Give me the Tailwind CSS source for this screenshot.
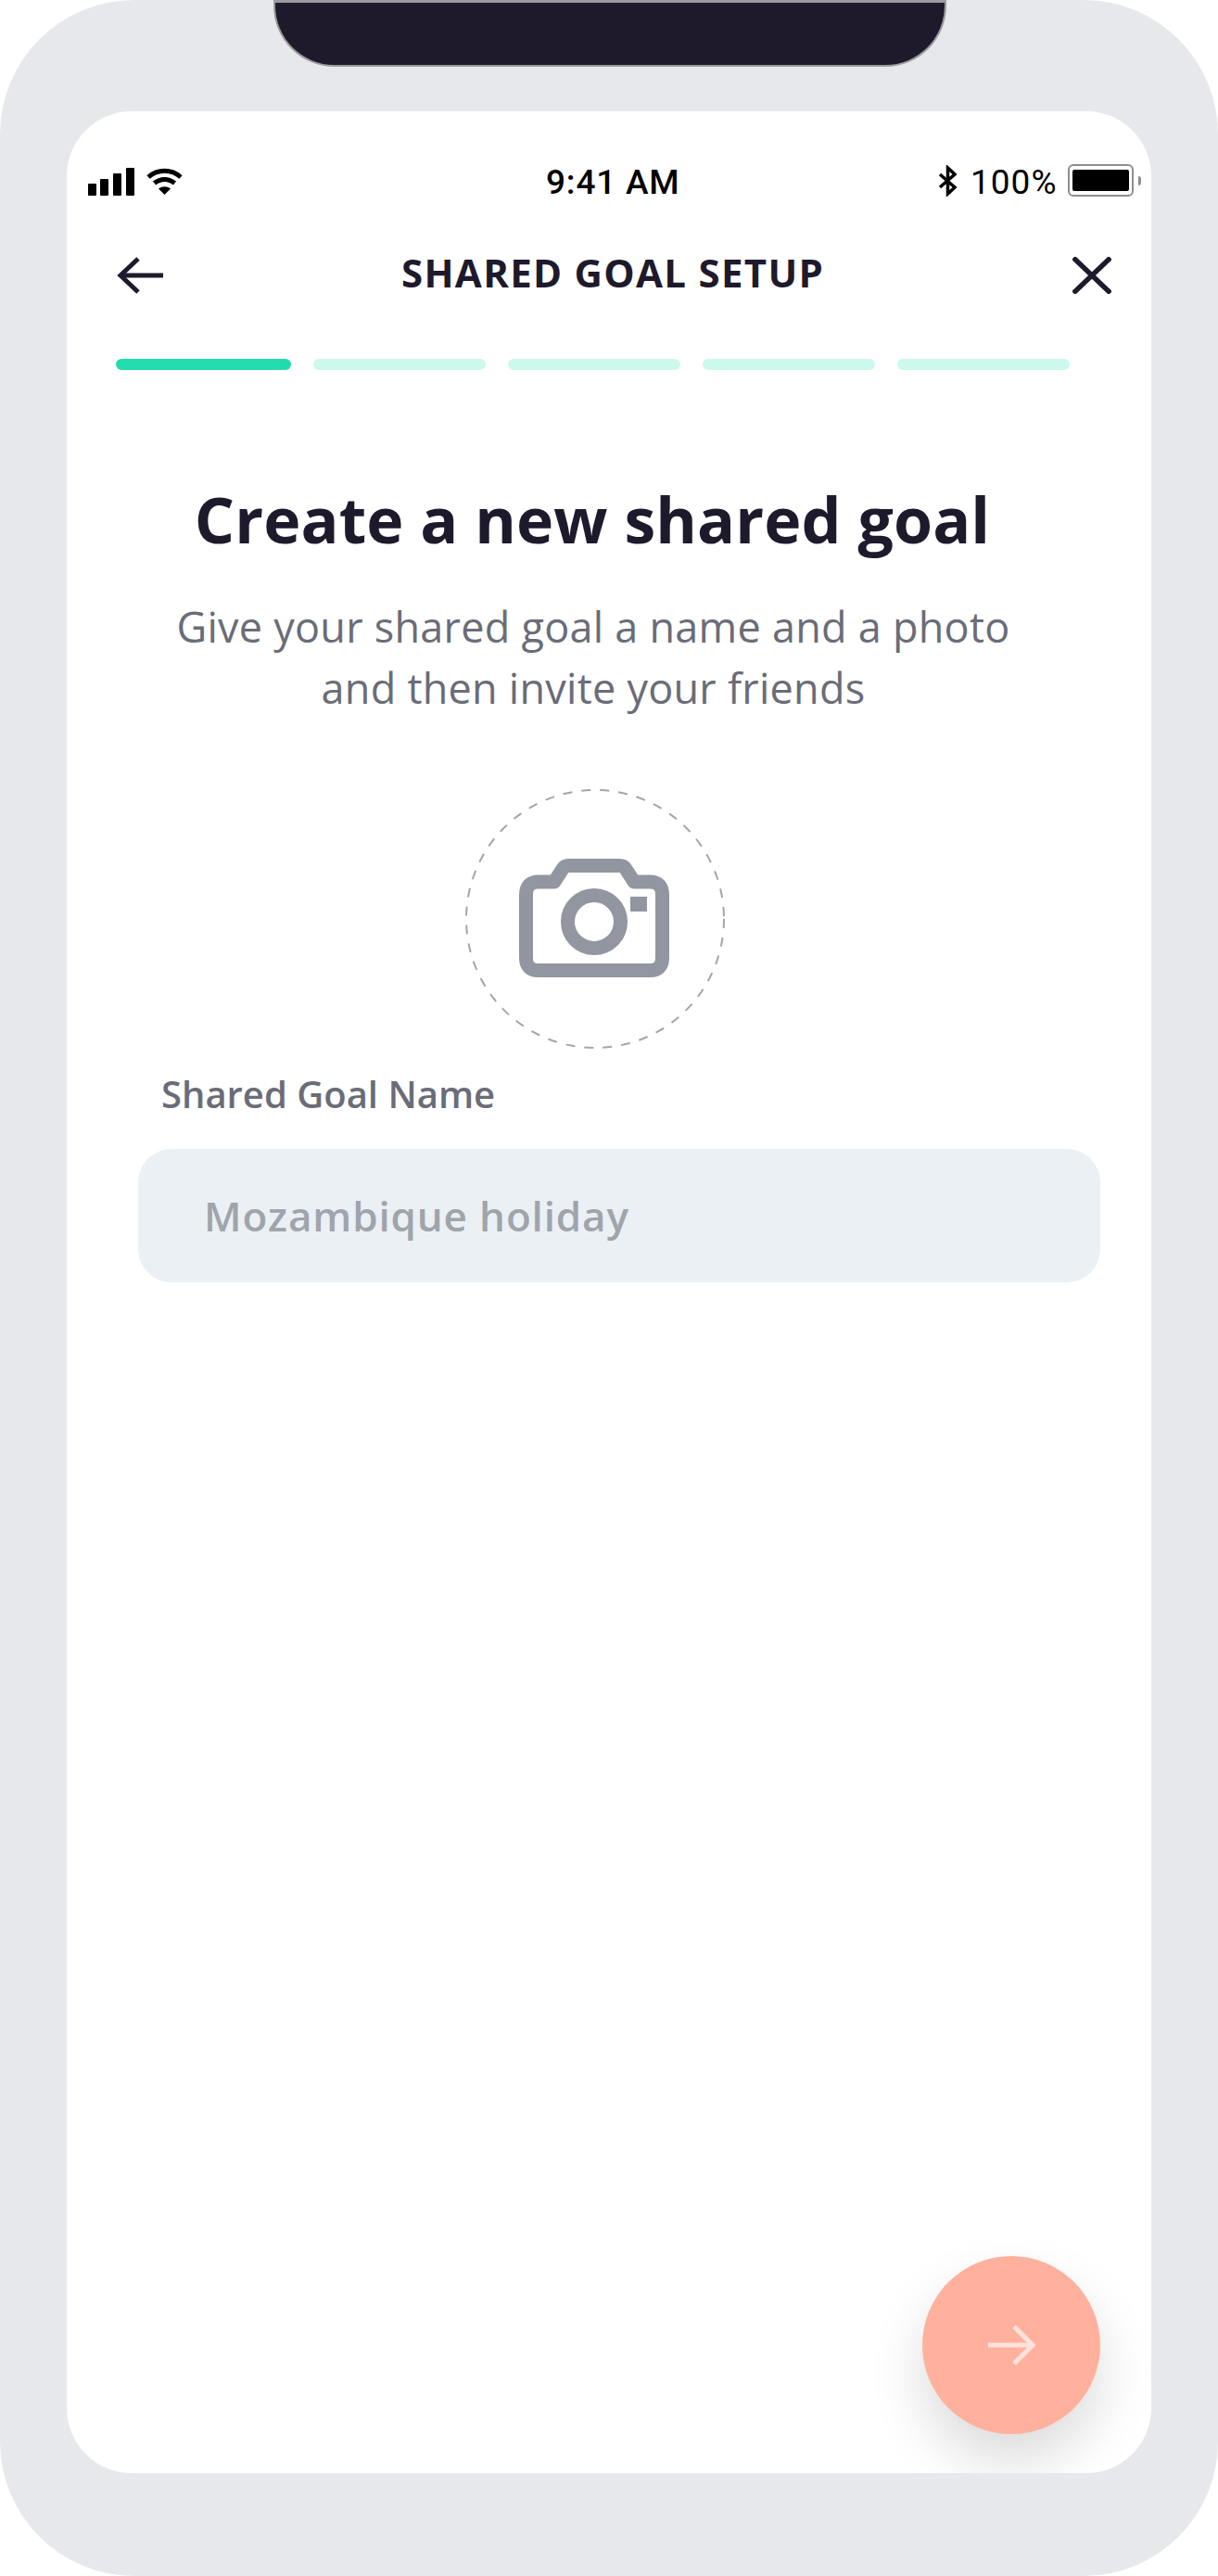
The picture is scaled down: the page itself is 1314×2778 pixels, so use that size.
<!DOCTYPE html>
<html>
<head>
<meta charset="utf-8">
<script src="https://cdn.jsdelivr.net/npm/@tailwindcss/browser@4"></script>
</head>
<body class="bg-white font-['Open_Sans','Noto_Sans',sans-serif]">
<div class="relative h-[2778px] w-[1314px] rounded-[145px] bg-[#e7e8ec] pt-[120px] px-[72px]">
  <div class="absolute left-[295px] top-0 h-[72px] w-[726px] rounded-b-[66px] border-x-2 border-b-2 border-t-[3px] border-[#9a9a9f] bg-[#1e1a2c]"></div>
  <div class="relative h-[2547px] w-[1170px] overflow-hidden rounded-[70px] bg-white pt-[57px]">
    <!-- status bar -->
    <div class="flex h-[35px] items-center pl-[23px] text-black">
      <svg class="mt-[3px] h-[30px] w-[50px] shrink-0" viewBox="0 0 50 30" fill="#000"><rect x="0" y="17" width="9" height="13" rx="1"/><rect x="13" y="12" width="9" height="18" rx="1"/><rect x="27" y="6" width="9" height="24" rx="1"/><rect x="41" y="0" width="9" height="30" rx="1"/></svg>
      <svg class="mt-[3px] ml-[13px] h-[30px] w-[39px] shrink-0" viewBox="0 0 39 30" fill="none" stroke="#000" stroke-width="5"><path d="M2 10C12 1 27 1 37 10"/><path d="M8.500 16.500C15 11 24 11 30.500 16.500"/><path d="M19.500 29L13 22.500C17 19.500 22 19.500 26 22.500Z" fill="#000" stroke="none"/></svg>
      <span class="mt-[4px] ml-[392px] w-[143px] shrink-0 whitespace-nowrap font-['Roboto',sans-serif] text-[37px] leading-[35px] font-medium tracking-[0.8px]">9:41 AM</span>
      <svg class="ml-[280px] h-[34px] w-[21px] shrink-0" viewBox="0 0 21 34" fill="none" stroke="#000" stroke-width="3.500"><path d="M2 10L18 24L10.500 31V3L18 10L2 24"/></svg>
      <span class="mt-[4px] ml-[14px] w-[91px] shrink-0 whitespace-nowrap font-['Roboto',sans-serif] text-[37px] leading-[35px] tracking-[1px]">100%</span>
      <div class="ml-[14px] flex h-[35px] w-[71px] shrink-0 items-center justify-center rounded-[6px] border-2 border-[#8e8e8e]">
        <div class="h-[23px] w-[61px] rounded-[2px] bg-black"></div>
      </div>
      <div class="ml-[5px] h-[10px] w-[3px] shrink-0 rounded-r bg-[#8e8e8e]"></div>
    </div>
    <!-- header -->
    <div class="mt-[65px] flex h-[40px] items-center pl-[54px] pr-[43px]">
      <svg class="h-[40px] w-[50px] shrink-0" viewBox="0 0 50 40" fill="none" stroke="#1e1a2c" stroke-width="5"><path d="M50 20H4"/><path d="M23 2L4 20L23 38"/></svg>
      <span class="mb-[6px] ml-[257px] whitespace-nowrap text-[42px] leading-[40px] font-bold tracking-[1.3px] text-[#1e1a2c]">SHARED GOAL SETUP</span>
      <svg class="ml-auto h-[40px] w-[42px] shrink-0" viewBox="0 0 42 40" fill="none" stroke="#1e1a2c" stroke-width="5.500"><path d="M1 1L41 39"/><path d="M41 1L1 39"/></svg>
    </div>
    <!-- progress -->
    <div class="mt-[70px] flex gap-[24px] pl-[53px]">
      <div class="h-[12px] w-[189px] rounded-full bg-[#22dcae]"></div>
      <div class="h-[12px] w-[186px] rounded-full bg-[#cdf8ec]"></div>
      <div class="h-[12px] w-[186px] rounded-full bg-[#cdf8ec]"></div>
      <div class="h-[12px] w-[186px] rounded-full bg-[#cdf8ec]"></div>
      <div class="h-[12px] w-[186px] rounded-full bg-[#cdf8ec]"></div>
    </div>
    <!-- heading -->
    <h1 class="mt-[121px] pr-[36px] text-center text-[68px] leading-[80px] font-bold tracking-[0.1px] text-[#1e1a2c]">Create a new shared goal</h1>
    <p class="mt-[43px] pr-[34px] text-center text-[45px] leading-[66px] tracking-[0.25px] text-[#6a6c78]">Give your shared goal a name and a photo<br>and then invite your friends</p>
    <!-- photo -->
    <div class="relative mt-[76px] ml-[430px] flex h-[280px] w-[280px] items-center justify-center">
      <svg class="absolute inset-0" width="280" height="280" viewBox="0 0 280 280" fill="none"><circle cx="140" cy="140" r="139" stroke="#a3a5ab" stroke-width="2" stroke-dasharray="10 10"/></svg>
      <svg class="relative top-[-1px] left-[-1px] h-[128px] w-[162px]" viewBox="0 0 162 128" fill="none" stroke="#9296a0" stroke-width="15"><path d="M7.500 39Q7.500 25 21 25H38L47 11Q49 7.500 54 7.500H108Q113 7.500 115 11L124 25H141Q154.500 25 154.500 39V107Q154.500 120.500 141 120.500H21Q7.500 120.500 7.500 107Z" stroke-linejoin="round"/><circle cx="81" cy="68" r="28.500"/><rect x="120" y="41" width="18" height="16" fill="#9296a0" stroke="none"/></svg>
    </div>
    <!-- field -->
    <label class="mt-[25px] ml-[102px] block text-[40px] leading-[48px] font-semibold text-[#6a6c78]">Shared Goal Name</label>
    <div class="mt-[35px] ml-[77px] flex h-[144px] w-[1038px] items-center rounded-[36px] bg-[#ebf0f4] pl-[71px] text-[44px] font-semibold tracking-[0.85px] text-[#a0a4ab]">Mozambique holiday</div>
    <!-- fab -->
    <div class="absolute left-[923px] top-[2313px] flex h-[192px] w-[192px] items-center justify-center rounded-full bg-[#ffb19d] shadow-[0_30px_60px_rgba(0,0,0,0.14)]">
      <svg class="h-[44px] w-[52px]" viewBox="0 0 52 44" fill="none" stroke="#ffe3dc" stroke-width="5"><path d="M1 22H47"/><path d="M29 2L49 22L29 42"/></svg>
    </div>
  </div>
</div>
</body>
</html>
